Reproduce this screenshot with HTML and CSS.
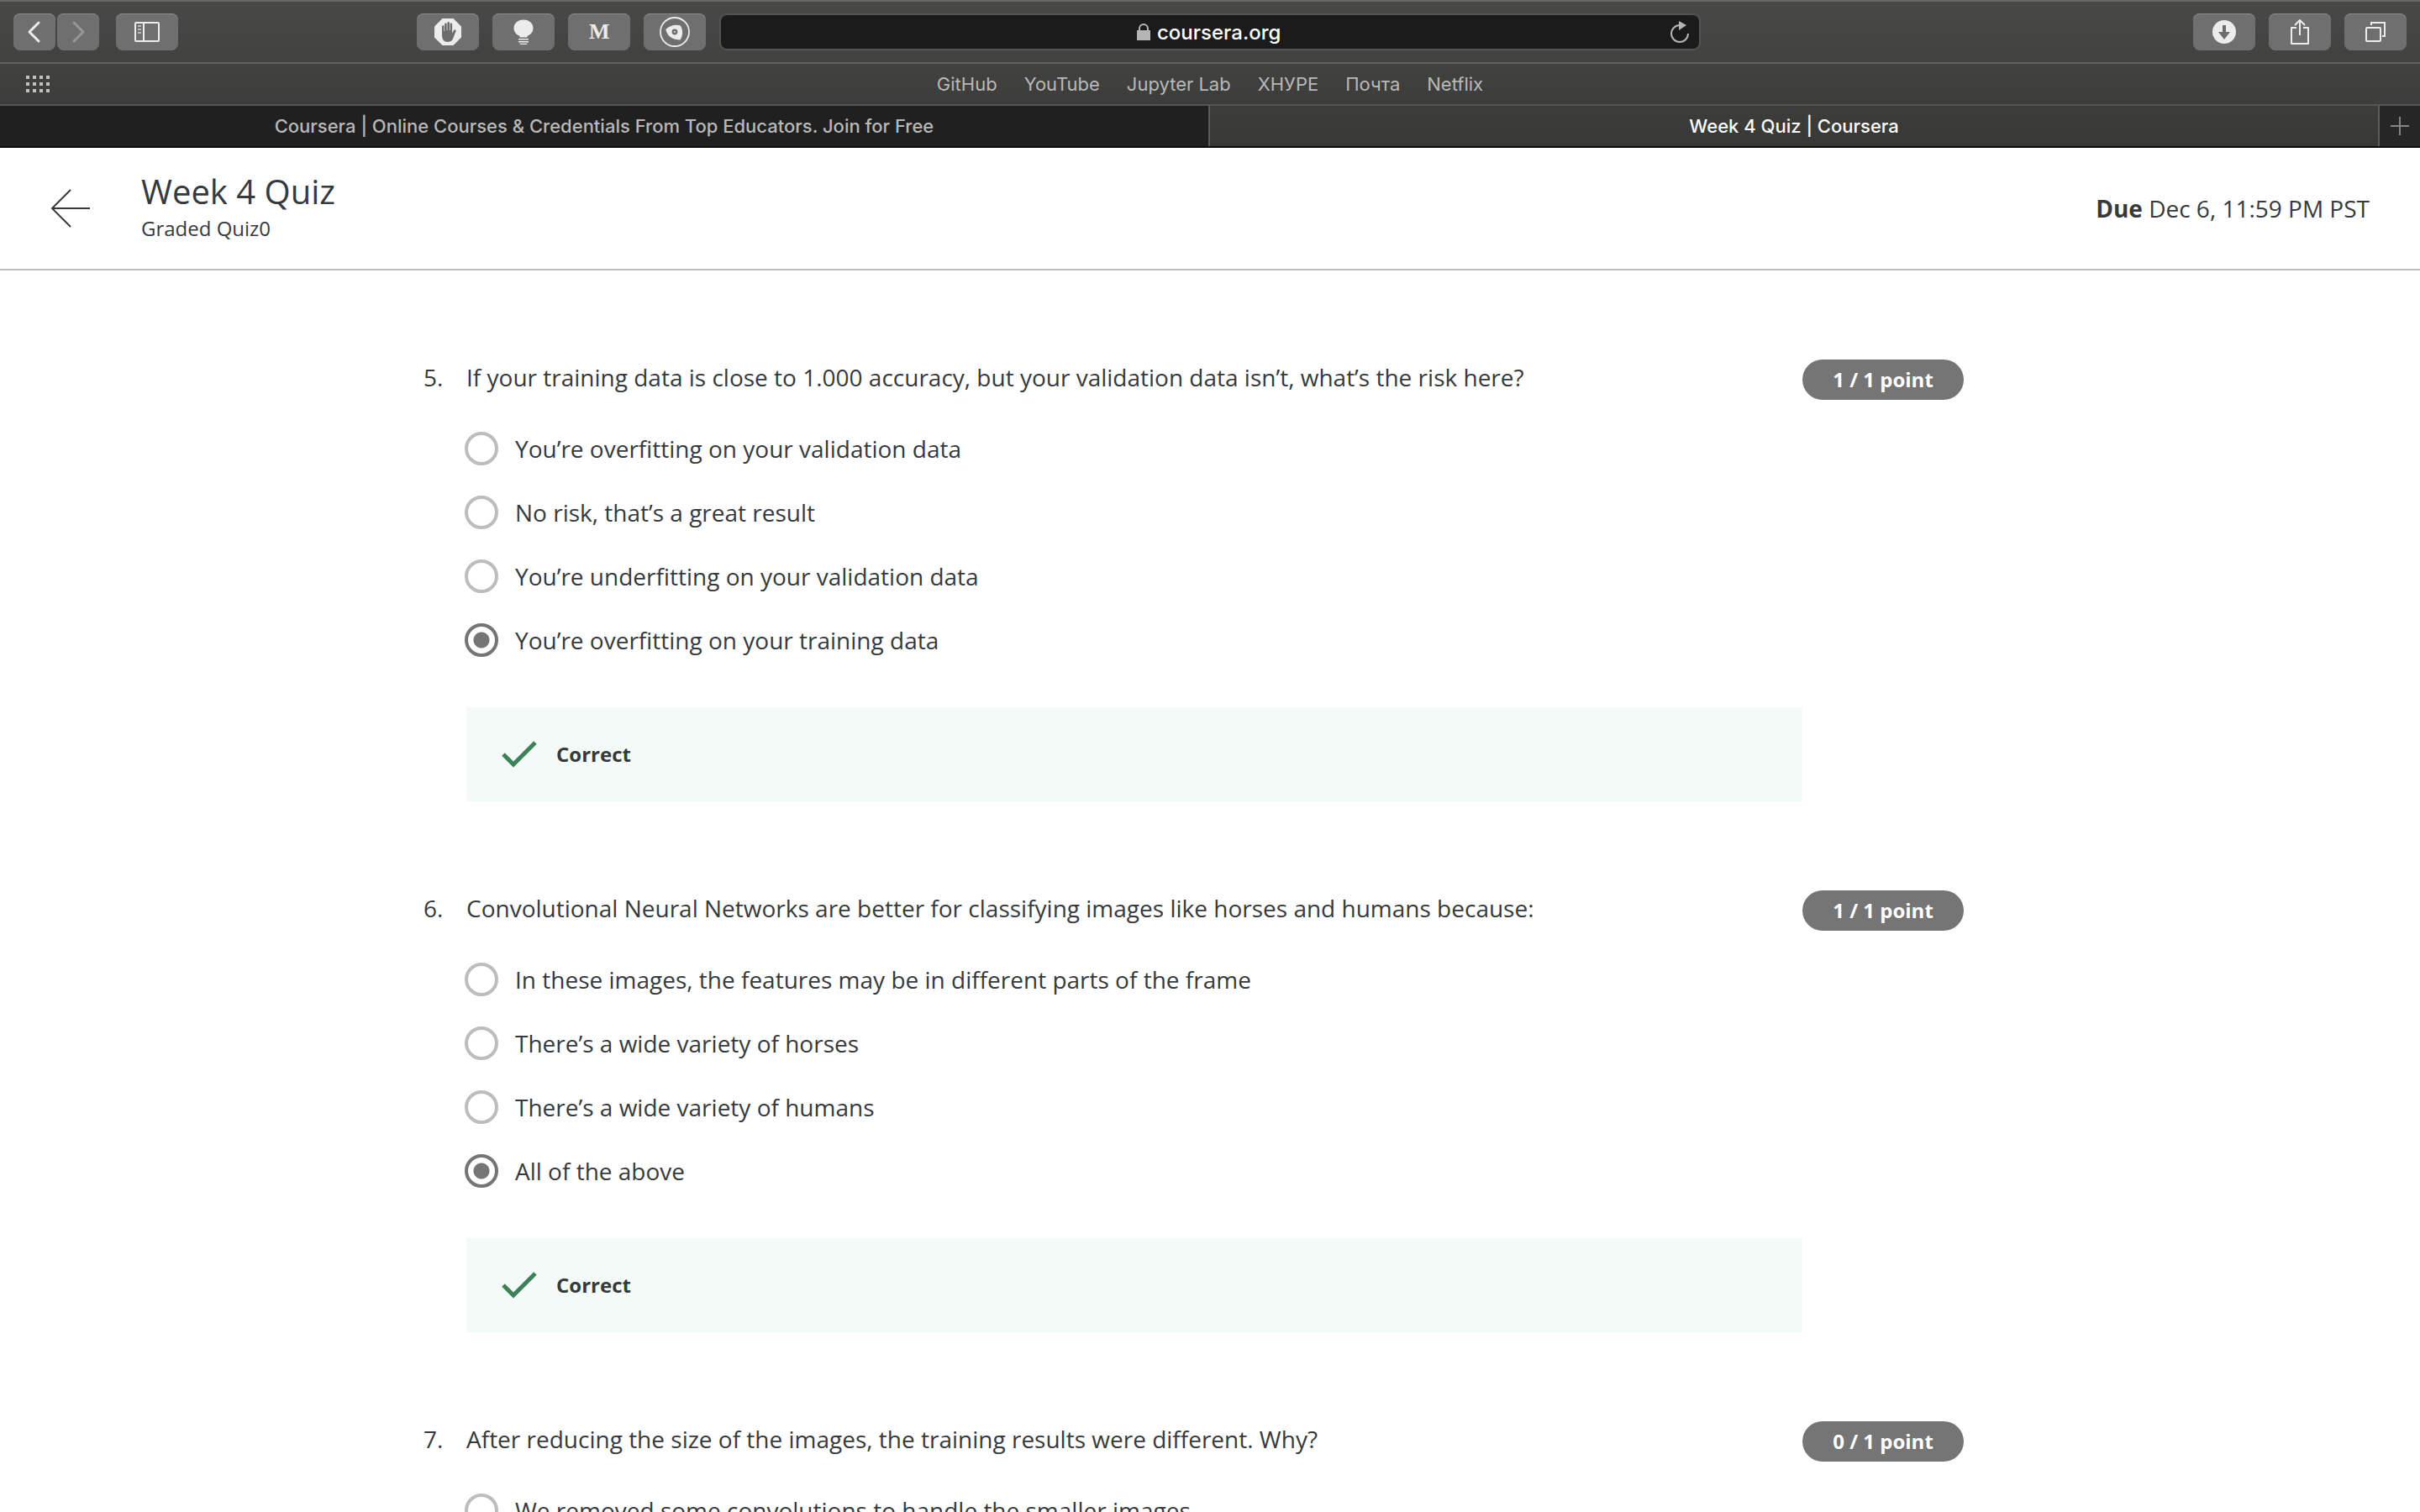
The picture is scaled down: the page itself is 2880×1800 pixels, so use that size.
FILE: index.html
```html
<!DOCTYPE html>
<html lang="en">
<head>
<meta charset="utf-8">
<title>Week 4 Quiz | Coursera</title>
<link rel="stylesheet" href="styles.css">
</head>
<body>
<div class="browser">
  <div class="toolbar">
    <div class="toolbar-side">
      <div class="nav-group">
        <div class="nav-pair">
          <button class="tool tool-narrow" type="button" aria-label="Back">
            <svg width="20" height="28" viewBox="0 0 20 28"><path d="M15 3 4 14l11 11" fill="none" stroke="#ececec" stroke-width="3" stroke-linecap="round" stroke-linejoin="round"/></svg>
          </button>
          <button class="tool tool-narrow" type="button" aria-label="Forward" disabled>
            <svg width="20" height="28" viewBox="0 0 20 28"><path d="m5 3 11 11L5 25" fill="none" stroke="#979797" stroke-width="3" stroke-linecap="round" stroke-linejoin="round"/></svg>
          </button>
        </div>
        <button class="tool" type="button" aria-label="Show sidebar">
          <svg width="30" height="24" viewBox="0 0 30 24"><g fill="none" stroke="#ececec" stroke-width="2"><rect x="1" y="1" width="28" height="22" rx="1"/><path d="M11 1v22"/></g><path d="M4 5h4M4 9h4M4 13h4" stroke="#b9b9b9" stroke-width="2"/></svg>
        </button>
      </div>
      <div class="tool-group">
        <button class="tool" type="button" aria-label="Ad blocker">
          <svg width="32" height="32" viewBox="0 0 32 32"><path d="M9.500 0h13L32 9.500v13L22.500 32h-13L0 22.500v-13z" fill="#ececec"/><path d="M9 20V9.500a1.200 1.200 0 0 1 2.400 0V15h.7V6.700a1.300 1.300 0 0 1 2.600 0V14h.7V5.300a1.300 1.300 0 0 1 2.600 0V14h.7V6.700a1.200 1.200 0 0 1 2.400 0v11l2-3.600c1-1.700 3-.9 2.400.9l-3.200 8.600C21.300 26.500 19 28 16 28c-4.500 0-7-3-7-8z" fill="#6d6d6d"/></svg>
        </button>
        <button class="tool" type="button" aria-label="Dim the page">
          <svg width="24" height="32" viewBox="0 0 24 32"><path d="M12 1.500C5 1.500.500 6 .500 11.500c0 5 3.500 8 7 9.500v1.500h9V21c3.500-1.500 7-4.500 7-9.500C23.500 6 19 1.500 12 1.500zM6 24h12v1.500H6zM6 27h12v1.500H6zM7 29.800h10L15.500 31h-7z" fill="#ececec"/></svg>
        </button>
        <button class="tool tool-letter" type="button">M</button>
        <button class="tool" type="button" aria-label="Privacy watcher">
          <svg width="36" height="36" viewBox="0 0 36 36"><circle cx="18" cy="18" r="17" fill="none" stroke="#ececec" stroke-width="1.800"/><path d="M7.300 15C12 10.500 18 8.500 24.500 10.300c3.800 5 3.200 12.500 0 17.200C16 27.500 9 23.500 7.300 15z" fill="#ececec"/><circle cx="18" cy="18" r="2.200" fill="#ececec" stroke="#6d6d6d" stroke-width="2.400"/></svg>
        </button>
      </div>
    </div>
    <form class="address">
      <label class="address-label" for="url" aria-label="Address">
        <svg width="16" height="20" viewBox="0 0 16 20"><path d="M3 9V6a5 5 0 0 1 10 0v3" fill="none" stroke="#b5b5b5" stroke-width="2"/><path d="M0 8h16v12H0z" fill="#b5b5b5"/></svg>
      </label>
      <input class="address-input" id="url" type="text" value="coursera.org">
      <button class="reload" type="button" aria-label="Reload">
        <svg width="24" height="28" viewBox="0 0 24 28"><path d="M12 6A10 10 0 1 0 22 16" fill="none" stroke="#b5b5b5" stroke-width="2"/><path d="m11 1 9 5-9 6z" fill="#b5b5b5"/></svg>
      </button>
    </form>
    <div class="toolbar-side toolbar-end">
      <div class="tool-group">
        <button class="tool" type="button" aria-label="Downloads">
          <svg width="28" height="28" viewBox="0 0 28 28"><circle cx="14" cy="14" r="14" fill="#ececec"/><path d="M12 6h4v8h5l-7 9-7-9h5z" fill="#6d6d6d"/></svg>
        </button>
        <button class="tool" type="button" aria-label="Share">
          <svg width="22" height="32" viewBox="0 0 22 32"><g fill="none" stroke="#ececec" stroke-width="2" stroke-linejoin="round"><path d="M7 11H1v19h20V11h-6"/><path d="M11 20V2M5 8l6-6 6 6"/></g></svg>
        </button>
        <button class="tool" type="button" aria-label="Tab overview">
          <svg width="24" height="24" viewBox="0 0 24 24"><g fill="none" stroke="#ececec" stroke-width="2"><rect x="1" y="7" width="17" height="16" rx="1"/><path d="M7 4V1h16v16h-3"/></g></svg>
        </button>
      </div>
    </div>
  </div>
  <nav class="bookmarks" aria-label="Favourites">
    <button class="grid-button" type="button" aria-label="Show bookmarks">
      <svg width="28" height="20" viewBox="0 0 28 20"><path d="M0 2h28M0 10h28M0 18h28" stroke="#c0c0c0" stroke-width="4" stroke-dasharray="4 4"/></svg>
    </button>
    <div class="bookmark-list">
      <a href="#">GitHub</a>
      <a href="#">YouTube</a>
      <a href="#">Jupyter Lab</a>
      <a href="#">ХНУРЕ</a>
      <a href="#">Почта</a>
      <a href="#">Netflix</a>
    </div>
  </nav>
  <div class="tabs">
    <a class="tab" href="#">Coursera | Online Courses &amp; Credentials From Top Educators. Join for Free</a>
    <a class="tab tab-current" href="#">Week 4 Quiz | Coursera</a>
    <button class="tab-new" type="button" aria-label="New tab">
      <svg width="22" height="22" viewBox="0 0 22 22"><path d="M11 0v22M0 11h22" stroke="#858585" stroke-width="2"/></svg>
    </button>
  </div>
</div>

<header class="quiz-header">
  <a class="back" href="#" aria-label="Back">
    <svg width="48" height="48" viewBox="0 0 48 48"><path d="M24 2 2 24l22 22M2 24h45" fill="none" stroke="#373a3c" stroke-width="2"/></svg>
  </a>
  <div class="heading">
    <h1 class="title">Week 4 Quiz</h1>
    <p class="subtitle">Graded Quiz0</p>
  </div>
  <p class="due"><strong>Due</strong> Dec 6, 11:59 PM PST</p>
</header>

<main class="quiz">
  <section class="question">
    <span class="number">5.</span>
    <fieldset class="body" aria-labelledby="q5">
      <h2 class="prompt" id="q5">If your training data is close to 1.000 accuracy, but your validation data isn’t, what’s the risk here?</h2>
      <div class="options">
        <label class="option"><input class="radio" type="radio" name="q5">You’re overfitting on your validation data</label>
        <label class="option"><input class="radio" type="radio" name="q5">No risk, that’s a great result</label>
        <label class="option"><input class="radio" type="radio" name="q5">You’re underfitting on your validation data</label>
        <label class="option"><input class="radio" type="radio" name="q5" checked>You’re overfitting on your training data</label>
      </div>
      <div class="feedback">
        <svg width="44" height="34" viewBox="0 0 44 34"><path d="m3 17 12 12L41 3" fill="none" stroke="#3d8257" stroke-width="5"/></svg>
        <strong>Correct</strong>
      </div>
    </fieldset>
    <span class="points">1 / 1 point</span>
  </section>

  <section class="question">
    <span class="number">6.</span>
    <fieldset class="body" aria-labelledby="q6">
      <h2 class="prompt" id="q6">Convolutional Neural Networks are better for classifying images like horses and humans because:</h2>
      <div class="options">
        <label class="option"><input class="radio" type="radio" name="q6">In these images, the features may be in different parts of the frame</label>
        <label class="option"><input class="radio" type="radio" name="q6">There’s a wide variety of horses</label>
        <label class="option"><input class="radio" type="radio" name="q6">There’s a wide variety of humans</label>
        <label class="option"><input class="radio" type="radio" name="q6" checked>All of the above</label>
      </div>
      <div class="feedback">
        <svg width="44" height="34" viewBox="0 0 44 34"><path d="m3 17 12 12L41 3" fill="none" stroke="#3d8257" stroke-width="5"/></svg>
        <strong>Correct</strong>
      </div>
    </fieldset>
    <span class="points">1 / 1 point</span>
  </section>

  <section class="question">
    <span class="number">7.</span>
    <fieldset class="body" aria-labelledby="q7">
      <h2 class="prompt" id="q7">After reducing the size of the images, the training results were different. Why?</h2>
      <div class="options">
        <label class="option"><input class="radio" type="radio" name="q7">We removed some convolutions to handle the smaller images</label>
      </div>
    </fieldset>
    <span class="points">0 / 1 point</span>
  </section>
</main>
</body>
</html>
```
FILE: styles.css
```css
* {
  box-sizing: border-box;
}

body {
  display: flex;
  flex-direction: column;
  height: 100vh;
  margin: 0;
  overflow: hidden;
  background: #fff;
  color: #373a3c;
  font: 28px/38px "Open Sans", "Noto Sans", sans-serif;
}

h1, h2, p, fieldset {
  margin: 0;
  padding: 0;
  border: 0;
  min-width: 0;
  font-weight: 400;
}

button, input {
  margin: 0;
  padding: 0;
  border: 0;
  background: none;
  font: inherit;
  color: inherit;
}

a {
  color: inherit;
  text-decoration: none;
}

svg {
  display: block;
  flex: none;
}

/* Browser window frame */
.browser {
  flex: none;
  border-top: 2px solid #686868;
  border-bottom: 2px solid #0c0c0c;
  background: linear-gradient(#484847, #383837);
  color: #b9b9b9;
  font: 22px/28px Inter, "Liberation Sans", sans-serif;
}

.toolbar {
  display: grid;
  grid-template-columns: 1fr 41% 1fr;
  gap: 16px;
  padding: 14px 16px;
  border-bottom: 2px solid #636363;
}

.toolbar-side {
  display: flex;
  justify-content: space-between;
}

.toolbar-end {
  justify-content: flex-end;
}

.nav-group {
  display: flex;
  gap: 20px;
}

.nav-pair {
  display: flex;
  gap: 2px;
}

.tool-group {
  display: flex;
  gap: 16px;
}

.tool {
  display: flex;
  align-items: center;
  justify-content: center;
  width: 74px;
  height: 44px;
  border-radius: 8px;
  background: #6f6f6f;
  box-shadow: inset 0 1px #8a8a8a;
}

.tool-narrow {
  width: 50px;
}

.tool-letter {
  color: #ececec;
  font: bold 26px/28px "Liberation Serif", serif;
}

.address {
  position: relative;
  display: flex;
  align-items: center;
  justify-content: center;
  gap: 8px;
  height: 44px;
  border: 2px solid #545454;
  border-radius: 9px;
  background: #1b1b1b;
}

.address-input {
  width: 150px;
  height: 36px;
  color: #fff;
  font-size: 24px;
  font-weight: 500;
}

.reload {
  position: absolute;
  right: 11px;
}

.bookmarks {
  display: grid;
  grid-template-columns: 1fr auto 1fr;
  align-items: center;
  height: 50px;
  padding: 0 31px;
  border-bottom: 2px solid #555;
}

.grid-button {
  justify-self: start;
}

.bookmark-list {
  display: flex;
  gap: 32px;
}

.tabs {
  display: flex;
  height: 48px;
}

.tab {
  flex: 1438;
  display: flex;
  align-items: center;
  justify-content: center;
  background: #202020;
  font-weight: 500;
}

.tab-current {
  flex: 1390;
  border: solid #5c5c5c;
  border-width: 0 2px;
  background: none;
  color: #fff;
}

.tab-new {
  display: flex;
  align-items: center;
  justify-content: center;
  width: 48px;
  background: #262626;
}

/* Quiz title bar */
.quiz-header {
  flex: none;
  display: flex;
  align-items: center;
  gap: 60px;
  height: 146px;
  padding: 0 60px;
  border-bottom: 2px solid #bdbdbd;
}

.heading {
  flex: 1;
}

.title {
  font-size: 40px;
  line-height: 48px;
}

.subtitle {
  font-size: 24px;
  line-height: 40px;
}

strong {
  font-weight: 700;
}

/* Questions */
.quiz {
  flex: 1;
  min-height: 0;
  overflow: hidden;
  width: 100%;
  max-width: 1920px;
  margin: 0 auto;
  padding: 106px 63px 0 24px;
}

.question {
  display: grid;
  grid-template-columns: 51px 1fr 192px;
  align-items: start;
  margin-bottom: 106px;
}

.number,
.prompt {
  font-size: 28px;
  line-height: 42px;
}

.options {
  display: grid;
  justify-items: start;
  gap: 36px;
  margin: 44px 0 0 -2px;
}

.option {
  display: flex;
  align-items: center;
  gap: 20px;
}

.radio {
  flex: none;
  appearance: none;
  width: 40px;
  height: 40px;
  border: 4px solid #bdbdbd;
  border-radius: 50%;
  background: #fff;
}

.radio:checked {
  border-color: #757575;
  background: radial-gradient(circle, #757575 9px, #fff 10px);
}

.feedback {
  display: flex;
  align-items: center;
  gap: 22px;
  height: 112px;
  margin-top: 60px;
  padding: 0 41px;
  background: #f4faf8;
  font-size: 24px;
}

.points {
  border-radius: 24px;
  background: #757575;
  color: #fff;
  font-size: 24px;
  font-weight: 700;
  line-height: 48px;
  text-align: center;
}
```
